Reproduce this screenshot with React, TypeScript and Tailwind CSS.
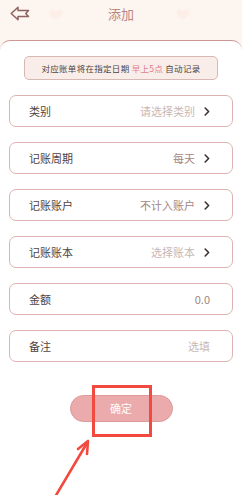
import React from 'react'

const font = {fontFamily: '"Noto Sans CJK SC", "Noto Sans", sans-serif'}

interface RowProps {
  label: string;
  value: string;
  valueClass: string;
  arrow?: boolean;
}

const Row = ({label, value, valueClass, arrow = true}: RowProps) => (
  <div className="flex h-8 items-center rounded-[7px] border border-[#dcb3b0] pl-[19px] pr-[22px]">
    <span className="text-[11px] text-[#4f4341]">{label}</span>
    <span className={`ml-auto text-[11px] ${valueClass}`}>{value}</span>
    {arrow &&
    <svg width="6" height="9" viewBox="0 0 6 9" className="ml-[9px]">
      <path d="M1.2 1 L4.6 4.5 L1.2 8" fill="none" stroke="#3d3231" strokeWidth="1.6" strokeLinecap="round" strokeLinejoin="round" />
    </svg>
    }
  </div>
)

const Heart = ({className}: {className: string}) => (
  <svg width="14" height="12" viewBox="0 0 14 12" className={className}>
    <path d="M7 11 C2 7.5 0.5 5.5 0.5 3.5 C0.5 1.8 1.8 0.5 3.5 0.5 C5 0.5 6.3 1.4 7 2.6 C7.7 1.4 9 0.5 10.5 0.5 C12.2 0.5 13.5 1.8 13.5 3.5 C13.5 5.5 12 7.5 7 11 Z" fill="#fcefe7" />
  </svg>
)

const App = () => {
  return (
    <div className="relative min-h-[495px] w-[242px] overflow-hidden bg-[#fdf5f0]" style={font}>
      <div className="relative flex h-10 items-center justify-center">
        <svg width="20" height="15" viewBox="0 0 20 15" className="absolute left-[10px] top-[6px]">
          <path d="M1.2 7.5 L8 1.2 L8 4.6 L18.5 4.6 L15.8 7.5 L18.5 10.4 L8 10.4 L8 13.8 Z" fill="none" stroke="#8d625f" strokeWidth="1.5" strokeLinejoin="round" />
        </svg>
        <Heart className="absolute left-[49px] top-[9px]" />
        <Heart className="absolute left-[176px] top-[9px]" />
        <span className="-mt-[12px] text-[13px] text-[#b98682]">添加</span>
      </div>
      <div className="min-h-[455px] rounded-t-[10px] border-t-[1.5px] border-[#cd9793] bg-white pb-10">
        <div className="mx-auto mt-[15px] flex h-6 w-[194px] items-center justify-center rounded-[5px] border border-[#d8b8b2] bg-[#f9ede9] text-[8.5px] tracking-[0.3px] text-[#4f4341]">
          对应账单将在指定日期&nbsp;<span className="text-[#e27b90]">早上5点</span>&nbsp;自动记录
        </div>
        <div className="mx-[9px] mt-[15px] flex flex-col gap-[15px]">
          <Row label="类别" value="请选择类别" valueClass="text-[#c9b7b5]" />
          <Row label="记账周期" value="每天" valueClass="text-[#a58581]" />
          <Row label="记账账户" value="不计入账户" valueClass="text-[#a58581]" />
          <Row label="记账账本" value="选择账本" valueClass="text-[#c9b7b5]" />
          <Row label="金额" value="0.0" valueClass="text-[#a08580]" arrow={false} />
          <Row label="备注" value="选填" valueClass="text-[#c9b7b5]" arrow={false} />
        </div>
        <div className="mt-[33px] flex justify-center">
          <button className="h-[27px] w-[103px] rounded-full border border-[#dc9a9a] bg-[#ebaaab] text-[11px] text-white">确定</button>
        </div>
      </div>
      <div className="absolute left-[92px] top-[385px] h-[52px] w-[60px] border-[3px] border-[#f24a3e]" />
      <svg width="60" height="60" viewBox="0 0 60 60" className="absolute left-[40px] top-[437px]">
        <path d="M15 60 L47 6" stroke="#f24a3e" strokeWidth="2.6" strokeLinecap="round" />
        <path d="M38 12 L48 4 L47 17" fill="none" stroke="#f24a3e" strokeWidth="2.6" strokeLinecap="round" strokeLinejoin="round" />
      </svg>
    </div>
  )
}

export default App
